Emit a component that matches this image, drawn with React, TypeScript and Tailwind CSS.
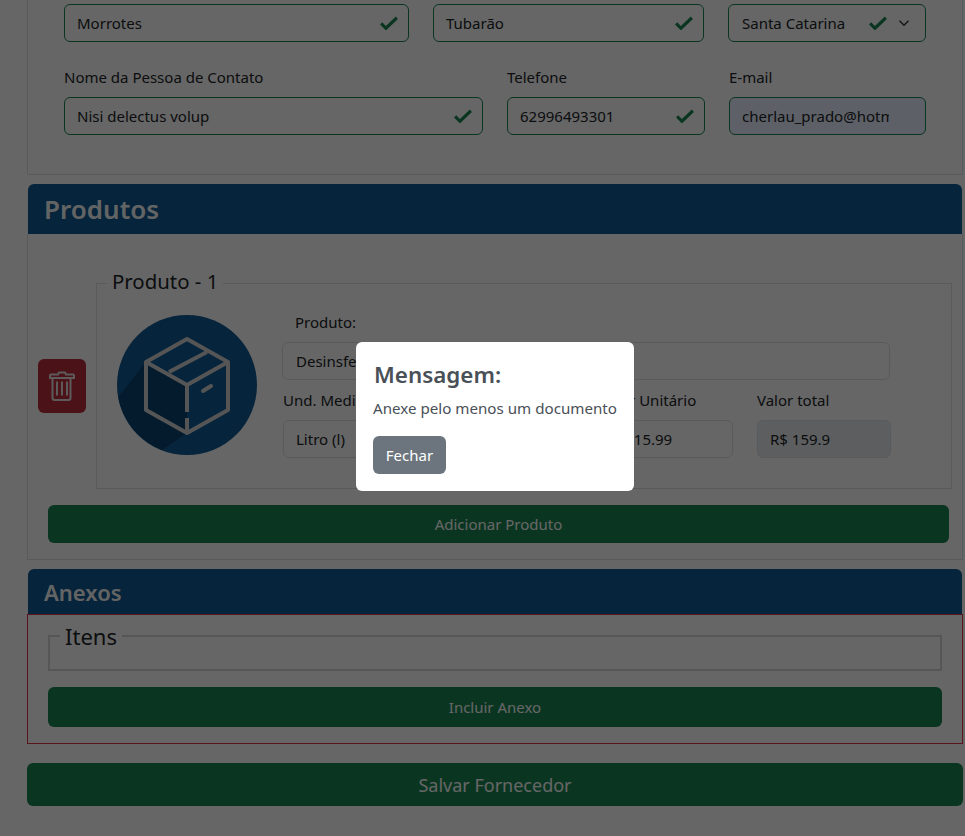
const font = { fontFamily: '"Noto Sans", sans-serif' }

function Check() {
  return (
    <svg viewBox="0 0 20 16" className="h-[14px] w-[18px] shrink-0">
      <path d="M1 8.5l5.500 5.500L19 2" fill="none" stroke="#198754" strokeWidth="3.600" />
    </svg>
  )
}

function Field({
  label,
  value,
  width,
  check = true,
}: {
  label?: string
  value: string
  width: string
  check?: boolean
}) {
  return (
    <div className={width}>
      {label && <div className="mb-2 h-6 text-[15px] leading-6 text-[#212529]">{label}</div>}
      <div className="flex h-[38px] items-center justify-between rounded-md border border-[#198754] pl-3 pr-[10px] text-[15px] text-[#212529]">
        <span>{value}</span>
        {check && <Check />}
      </div>
    </div>
  )
}

function PlainField({ label, value, width, muted }: { label: string; value: string; width: string; muted?: boolean }) {
  return (
    <div className={width}>
      <div className="mb-2 h-6 whitespace-nowrap text-[15px] leading-6 text-[#212529]">{label}</div>
      <div
        className={`flex h-[38px] items-center rounded-md border border-[#dee2e6] px-3 text-[15px] text-[#212529] ${
          muted ? 'bg-[#e9ecef]' : ''
        }`}
      >
        {value}
      </div>
    </div>
  )
}

function BoxBadge() {
  return (
    <svg viewBox="0 0 140 140" className="h-[140px] w-[140px] shrink-0">
      <circle cx="70" cy="70" r="70" fill="#115a94" />
      <path d="M29 47L70 70V118L45 135A70 70 0 0 1 1.300 82z" fill="#0a4470" />
      <g fill="none" stroke="#d4d4d4" strokeWidth="4" strokeLinejoin="round">
        <path d="M70 24L111 47V95L70 118L29 95V47z" />
        <path d="M29 47L70 70L111 47" />
        <path d="M70 70V97M70 103V118" />
        <path d="M52 57L90 37" />
        <path d="M86 76L94 71" strokeLinecap="round" />
      </g>
    </svg>
  )
}

function TrashIcon() {
  return (
    <svg viewBox="0 0 26 30" className="h-[30px] w-[26px]" fill="none" stroke="#eadfe1" strokeWidth="2">
      <path d="M1 7h24V4.500a1 1 0 0 0-1-1H17l-1-2H10l-1 2H2a1 1 0 0 0-1 1z" />
      <path d="M3.500 7v20a2 2 0 0 0 2 2h14a2 2 0 0 0 2-2V7" />
      <path d="M8 10.500v14M13 10.500v14M18 10.500v14" />
    </svg>
  )
}

export default function App() {
  return (
    <div className="relative h-[836px] w-[965px] overflow-hidden bg-white pl-[27px] pr-[2px]" style={font}>
      <div className="h-[175px] border-x border-b border-[#dee2e6] pl-9 pr-9 pt-1">
        <div className="flex gap-6">
          <Field value="Morrotes" width="w-[345px]" />
          <Field value="Tubarão" width="w-[271px]" />
          <div className="flex h-[38px] w-[198px] items-center rounded-md border border-[#198754] pl-[13px] text-[15px] text-[#212529]">
            <span className="flex-1">Santa Catarina</span>
            <Check />
            <svg viewBox="0 0 16 16" className="ml-[11px] mr-[15px] h-3 w-3" fill="none" stroke="#343a40" strokeWidth="2">
              <path d="M2 5l6 6 6-6" />
            </svg>
          </div>
        </div>
        <div className="mt-[23px] flex gap-6">
          <Field label="Nome da Pessoa de Contato" value="Nisi delectus volup" width="w-[419px]" />
          <Field label="Telefone" value="62996493301" width="w-[198px]" />
          <div className="w-[197px]">
            <div className="mb-2 h-6 text-[15px] leading-6 text-[#212529]">E-mail</div>
            <div className="flex h-[38px] items-center overflow-hidden rounded-md border border-[#198754] bg-[#e8f0fe] pl-3 text-[15px] text-[#212529]">
              <span className="w-[147px] overflow-hidden whitespace-nowrap">cherlau_prado@hotmail.com</span>
            </div>
          </div>
        </div>
      </div>

      <div className="ml-px mr-px mt-[9px] flex h-[50px] items-center rounded-t-md bg-[#115a94] pl-4 pt-px text-[26px] font-semibold text-[#f8f9fa]">
        Produtos
      </div>
      <div className="h-[326px] border-x border-b border-[#dee2e6] pl-[10px] pr-[11px]">
        <div className="flex pt-[37px]">
          <div className="flex w-[58px] shrink-0 items-center">
            <div className="mt-[11px] flex h-[54px] w-[48px] items-center justify-center rounded-md bg-[#bb2d3b]">
              <TrashIcon />
            </div>
          </div>
          <fieldset className="h-[218px] w-[855px] border border-[#dee2e6] pl-[20px] pr-[60px]">
            <legend className="ml-[-10px] px-[5px] pb-1 text-[20.400px] leading-5 text-[#212529]">Produto - 1</legend>
            <div className="flex gap-[25px]">
              <div className="pt-[20px]">
                <BoxBadge />
              </div>
              <div className="flex-1">
                <div className="ml-[13px] mt-[15px] h-6 text-[15px] leading-6 text-[#212529]">Produto:</div>
                <div className="mt-2 flex h-[38px] w-[608px] items-center rounded-md border border-[#dee2e6] pl-[13px] text-[15px] text-[#212529]">
                  Desinsfetante
                </div>
                <div className="ml-px mt-2 flex gap-6">
                  <PlainField label="Und. Medida" value="Litro (l)" width="w-[150px]" />
                  <PlainField label="Quantidade" value="10" width="w-[118px]" />
                  <PlainField label="Valor Unitário" value="R$ 15.99" width="w-[134px]" />
                  <PlainField label="Valor total" value="R$ 159.9" width="w-[134px]" muted />
                </div>
              </div>
            </div>
          </fieldset>
        </div>
        <button className="ml-[10px] mt-[16px] h-[38px] w-[901px] rounded-md bg-[#198754] text-[15px] text-white">
          Adicionar Produto
        </button>
      </div>

      <div className="ml-px mr-px mt-[9px] flex h-[45px] items-center rounded-t-md bg-[#115a94] pl-4 pt-px text-[22px] font-semibold text-[#f8f9fa]">
        Anexos
      </div>
      <div className="h-[130px] border border-[#dc3545] pl-5 pr-5">
        <fieldset className="mt-[7px] h-[49px] border-2 border-[#d6d6d6] pl-[10px]">
          <legend className="px-[5px] text-[22px] leading-7 text-[#212529]">Itens</legend>
        </fieldset>
        <button className="mt-[16px] h-10 w-full rounded-md bg-[#198754] text-[15px] text-white">Incluir Anexo</button>
      </div>

      <button className="mt-[19px] h-[43px] w-full rounded-md bg-[#198754] pt-px text-[18px] text-white">Salvar Fornecedor</button>

      {/* MODAL */}
      <div className="absolute inset-0 flex items-start bg-black/60 pl-[356px] pt-[342px]">
        <div className="h-[149px] w-[278px] rounded-md bg-white pl-[17px] pt-[16px]">
          <h2 className="pl-px text-[22.400px] font-semibold leading-[34px] text-[#495057]">Mensagem:</h2>
          <p className="mt-1 whitespace-nowrap text-[15.150px] leading-6 text-[#495057]">Anexe pelo menos um documento</p>
          <button className="mt-4 h-[38px] w-[73px] rounded-md bg-[#6c757d] text-[15px] text-white">Fechar</button>
        </div>
      </div>
    </div>
  )
}
